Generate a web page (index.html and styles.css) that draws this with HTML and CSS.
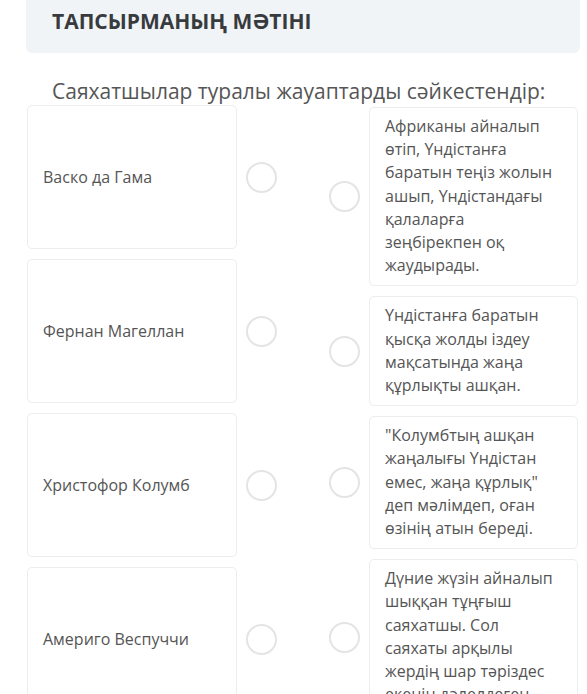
FILE: index.html
```html
<!DOCTYPE html>
<html lang="kk">
  <head>
    <meta charset="UTF-8" />
    <meta name="viewport" content="width=device-width, initial-scale=1.0" />
    <title>Тапсырманың мәтіні</title>
    <link rel="stylesheet" href="styles.css">
  </head>
  <body>
    <div class="task">
      <div class="task-header">ТАПСЫРМАНЫҢ МӘТІНІ</div>

      <p class="question">Саяхатшылар туралы жауаптарды сәйкестендір:</p>

      <div class="match">
        <div class="match-col">
          <div class="left-item">
            <div class="card card-name">Васко да Гама</div>
            <span class="dot"></span>
          </div>
          <div class="left-item">
            <div class="card card-name">Фернан Магеллан</div>
            <span class="dot"></span>
          </div>
          <div class="left-item">
            <div class="card card-name">Христофор Колумб</div>
            <span class="dot"></span>
          </div>
          <div class="left-item">
            <div class="card card-name">Америго Веспуччи</div>
            <span class="dot"></span>
          </div>
        </div>

        <div class="match-col">
          <div class="right-item">
            <span class="dot"></span>
            <div class="card card-answer">Африканы айналып өтіп, Үндістанға баратын теңіз жолын ашып, Үндістандағы қалаларға зеңбірекпен оқ жаудырады.</div>
          </div>
          <div class="right-item">
            <span class="dot"></span>
            <div class="card card-answer">Үндістанға баратын қысқа жолды іздеу мақсатында жаңа құрлықты ашқан.</div>
          </div>
          <div class="right-item">
            <span class="dot"></span>
            <div class="card card-answer">"Колумбтың ашқан жаңалығы Үндістан емес, жаңа құрлық" деп мәлімдеп, оған өзінің атын береді.</div>
          </div>
          <div class="right-item">
            <span class="dot"></span>
            <div class="card card-answer">Дүние жүзін айналып шыққан тұңғыш саяхатшы. Сол саяхаты арқылы жердің шар тәріздес екенін дәлелдеген.</div>
          </div>
        </div>
      </div>
    </div>
  </body>
</html>
```

FILE: styles.css
```css
body {
  margin: 0;
  font-family: "Open Sans", "Noto Sans", sans-serif;
  background-color: #fff;
  color: #555;
}

.task {
  padding: 0 7px 0 26px;
}

.task-header {
  background-color: #f1f4f7;
  border-radius: 0 0 6px 6px;
  padding: 7px 26px 18px;
  font-size: 21px;
  line-height: 28px;
  font-weight: bold;
  color: #383b3e;
}

.question {
  margin: 0;
  padding: 25px 26px 0;
  font-size: 21px;
  line-height: 27px;
  color: #555;
}

.match {
  display: flex;
  justify-content: space-between;
  padding: 0 1px;
}

.match-col {
  display: flex;
  flex-direction: column;
  gap: 10px;
  width: 250px;
}

.left-item,
.right-item {
  display: flex;
  align-items: center;
  gap: 9px;
}

.card {
  background-color: #fff;
  border: 1px solid #ebedef;
  border-radius: 5px;
  box-sizing: border-box;
  font-size: 16px;
  color: #555;
}

.card-name {
  width: 210px;
  height: 144px;
  display: flex;
  align-items: center;
  padding: 0 15px;
}

.card-answer {
  width: 209px;
  padding: 7px 12px 8px 15px;
  line-height: 23.2px;
}

.right-item:first-child {
  margin-top: 2px;
}

.dot {
  flex: none;
  width: 31px;
  height: 31px;
  box-sizing: border-box;
  border: 2px solid #e2e4e6;
  border-radius: 50%;
}
```
